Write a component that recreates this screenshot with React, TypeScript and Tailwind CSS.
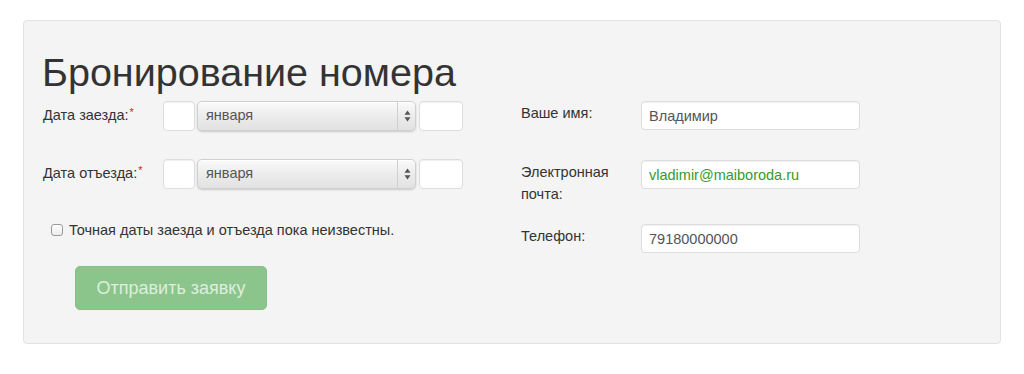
const font = { fontFamily: '"Liberation Sans", Arial, sans-serif' };

function Required() {
  return <span className="relative -top-[4px] ml-[1px] text-[11px] text-[#e0201b]">*</span>;
}

function Arrows() {
  return (
    <svg width="7" height="12" viewBox="0 0 7 12" className="fill-[#555]">
      <path d="M3.5 0.5 L6.5 4.8 L0.5 4.8 Z" />
      <path d="M3.5 11.5 L6.5 7.2 L0.5 7.2 Z" />
    </svg>
  );
}

function DateRow({ label }: { label: string }) {
  return (
    <div className="flex h-[30px]">
      <label className="w-[120px] pt-[4px] text-[14.5px] leading-[20px] text-[#333]">
        {label}
        <Required />
      </label>
      <input
        type="text"
        className="h-[30px] w-[32px] rounded-[4px] border border-[#ddd] bg-white shadow-[inset_0_1px_1px_rgba(0,0,0,0.06)] outline-none"
      />
      <div className="relative ml-[2px] h-[30px] w-[219px]">
        <select
          defaultValue="1"
          className="h-full w-full appearance-none rounded-[5px] border border-[#d0d0d0] bg-gradient-to-b from-[#fafafa] via-[#ececec] to-[#e2e2e2] pl-[8px] text-[14.5px] text-[#555] shadow-[0_1px_2px_rgba(0,0,0,0.18),inset_0_1px_0_#fff] outline-none"
          style={font}
        >
          <option value="1">января</option>
          <option value="2">февраля</option>
          <option value="3">марта</option>
        </select>
        <div className="pointer-events-none absolute right-0 top-[1px] flex h-[28px] w-[19px] items-center justify-center border-l border-[#cfcfcf]">
          <Arrows />
        </div>
      </div>
      <input
        type="text"
        className="ml-[3px] h-[30px] w-[44px] rounded-[4px] border border-[#ddd] bg-white shadow-[inset_0_1px_1px_rgba(0,0,0,0.06)] outline-none"
      />
    </div>
  );
}

function Field({ label, value, green }: { label: React.ReactNode; value: string; green?: boolean }) {
  return (
    <div className="flex">
      <label className="w-[120px] pt-[1px] text-[14.5px] leading-[22px] text-[#333]">{label}</label>
      <input
        type="text"
        defaultValue={value}
        className={`h-[29px] w-[219px] rounded-[4px] border border-[#ddd] bg-white px-[7px] text-[14.5px] shadow-[inset_0_1px_1px_rgba(0,0,0,0.06)] outline-none ${
          green ? "text-[#349b2f]" : "text-[#555]"
        }`}
        style={font}
      />
    </div>
  );
}

export default function App() {
  return (
    <main className="h-[374px] w-[1024px] bg-white pt-[20px]" style={font}>
      <section className="ml-[23px] h-[324px] w-[978px] rounded-[4px] border border-[#e3e3e3] bg-[#f4f4f4] pl-[18px] pt-[31px]">
        <h1 className="text-[39.5px] leading-[40px] text-[#333]">Бронирование номера</h1>

        <form className="mt-[9px] flex">
          <div className="w-[479px] pl-[1px]">
            <DateRow label="Дата заезда:" />
            <div className="mt-[28px]">
              <DateRow label="Дата отъезда:" />
            </div>

            <label className="ml-[8px] mt-[31px] flex items-center gap-[6px] text-[14.5px] leading-[20px] text-[#333]">
              <span className="h-[12px] w-[12px] rounded-[3px] border border-[#9a9a9a] bg-gradient-to-b from-white to-[#ececec]" />
              Точная даты заезда и отъезда пока неизвестны.
            </label>

            <button
              type="button"
              disabled
              className="ml-[32px] mt-[26px] h-[44px] w-[192px] rounded-[5px] border border-[#83c083] bg-[#8cc58c] text-[18px] text-[#dcefdc]"
              style={font}
            >
              Отправить заявку
            </button>
          </div>

          <div className="flex flex-col">
            <Field label="Ваше имя:" value="Владимир" />
            <div className="mt-[30px]">
              <Field
                label={
                  <>
                    Электронная
                    <br />
                    почта:
                  </>
                }
                value="vladimir@maiboroda.ru"
                green
              />
            </div>
            <div className="mt-[19px]">
              <Field label="Телефон:" value="79180000000" />
            </div>
          </div>
        </form>
      </section>
    </main>
  );
}
